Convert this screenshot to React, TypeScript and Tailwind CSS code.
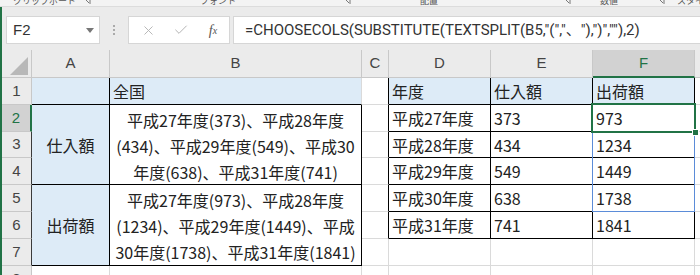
import React from 'react';
import { X, Check } from 'lucide-react';
import { twMerge } from 'tailwind-merge';

const JP = 'font-["Noto_Sans_CJK_JP","Noto_Sans",sans-serif]';
const UI = 'font-["Liberation_Sans","Noto_Sans_CJK_JP",sans-serif]';

type CellProps = {
  r?: boolean;
  b?: boolean;
  fill?: boolean;
  className?: string;
  children?: React.ReactNode;
};

const Cell: React.FC<CellProps> = ({ r, b, fill, className, children }) => (
  <div
    className={twMerge(
      'border-r border-b border-r-[#dadada] border-b-[#dadada] px-[3px] text-[16px] leading-[26px] text-[#222] whitespace-nowrap overflow-hidden',
      JP,
      r && 'border-r-black',
      b && 'border-b-black',
      fill && 'bg-[#ddebf7]',
      className
    )}
  >
    {children}
  </div>
);

const ColHead: React.FC<{ label: string; sel?: boolean }> = ({ label, sel }) => (
  <div
    className={twMerge(
      'flex items-center justify-center border-r border-b border-r-[#c8c8c8] border-b-[#c8c8c8] bg-[#ebebeb] text-[15px] text-[#444] overflow-hidden',
      UI,
      sel && 'bg-[#d2d2d2] text-[#217346] border-b-2 border-b-[#217346]'
    )}
  >
    {label}
  </div>
);

const RowHead: React.FC<{ n: number; dark?: boolean; sel?: boolean }> = ({ n, dark, sel }) => (
  <div
    className={twMerge(
      'flex items-center justify-center border-r border-b border-r-[#c8c8c8] border-b-[#c8c8c8] bg-[#ebebeb] text-[15px] text-[#444]',
      UI,
      dark && 'border-r-[#3a3a3a]',
      sel && 'bg-[#d2d2d2] text-[#217346] border-r-2 border-r-[#217346]'
    )}
  >
    {n}
  </div>
);

const Launcher = () => (
  <svg width="8" height="8" viewBox="0 0 8 8" className="shrink-0">
    <path d="M1 1h6v6" fill="none" stroke="#777" strokeWidth="1" />
    <path d="M2 2l4 4" stroke="#777" strokeWidth="1" />
  </svg>
);

// ribbon group labels, only their lower edge shows under the top of the window
const ribbon: { w: number; el: React.ReactNode }[] = [
  { w: 13, el: null },
  { w: 70, el: 'クリップボード' },
  { w: 117, el: <Launcher /> },
  { w: 143, el: 'フォント' },
  { w: 77, el: <Launcher /> },
  { w: 143, el: '配置' },
  { w: 37, el: <Launcher /> },
  { w: 57, el: '数値' },
  { w: 20, el: <Launcher /> },
  { w: 40, el: 'スタイル' },
];

const years = [
  ['平成27年度', '373', '973'],
  ['平成28年度', '434', '1234'],
  ['平成29年度', '549', '1449'],
  ['平成30年度', '638', '1738'],
  ['平成31年度', '741', '1841'],
];

const buyLines = ['平成27年度(373)、平成28年度', '(434)、平成29年度(549)、平成30', '年度(638)、平成31年度(741)'];
const shipLines = ['平成27年度(973)、平成28年度', '(1234)、平成29年度(1449)、平成', '30年度(1738)、平成31年度(1841)'];

const Ribbon = () => (
  <div className="h-[7px] overflow-hidden bg-[#f3f3f3] border-b border-[#dcdcdc]">
    <div className={`flex items-end -mt-[7px] h-[12px] text-[9px] text-[#555] ${JP}`}>
      {ribbon.map((it, i) => (
        <div key={i} style={{ width: it.w }} className="shrink-0 flex items-end leading-none">
          {it.el}
        </div>
      ))}
    </div>
  </div>
);

const FormulaBar = () => (
  <div className="h-[43px] bg-[#ebebeb] flex items-start pt-[9px] pl-[4px]">
    <div className={`w-[94px] h-[28px] bg-white border border-[#d6d6d6] flex items-center justify-between pl-[6px] pr-[5px] text-[15px] text-[#333] ${UI}`}>
      F2
      <svg width="8" height="5" viewBox="0 0 8 5">
        <path d="M0 0h8L4 5z" fill="#777" />
      </svg>
    </div>
    <div className="w-[28px] h-[28px] flex flex-col items-center justify-center gap-[2px]">
      <div className="w-[2px] h-[2px] bg-[#aaa]" />
      <div className="w-[2px] h-[2px] bg-[#aaa]" />
      <div className="w-[2px] h-[2px] bg-[#aaa]" />
    </div>
    <div className="w-[102px] h-[28px] bg-white border border-[#d6d6d6] flex items-center">
      <div className="w-[36px] flex justify-center pl-[2px]">
        <X size={15} strokeWidth={1.5} color="#b4b4b4" />
      </div>
      <div className="w-[32px] flex justify-center">
        <Check size={16} strokeWidth={1.5} color="#b4b4b4" />
      </div>
      <div className="w-[32px] flex justify-center text-[14px] text-[#555] italic font-['Liberation_Serif',serif]">
        f<span className="text-[10px] mt-[3px]">x</span>
      </div>
    </div>
    <div className="flex-1 h-[28px] ml-[3px] bg-white border border-r-0 border-[#d6d6d6] flex items-center pl-[11px] text-[15px] text-[#333] whitespace-nowrap overflow-hidden font-['Roboto','Noto_Sans_CJK_JP',sans-serif]">
      =CHOOSECOLS(SUBSTITUTE(TEXTSPLIT(B5,"(","、"),")",""),2)
    </div>
  </div>
);

const Lines: React.FC<{ lines: string[] }> = ({ lines }) => (
  <div className="h-full flex flex-col items-center justify-center pt-[2px]">
    {lines.map((l) => (
      <div key={l}>{l}</div>
    ))}
  </div>
);

const Sheet = () => (
  <div className="grid grid-cols-[30px_78px_252px_27px_102px_102px_102px_1fr] grid-rows-[28px_27px_27px_26px_27px_27px_27px_27px_27px]">
    {/* header row */}
    <div className="relative border-r border-b border-[#c8c8c8] bg-[#ebebeb]">
      <svg width="18" height="18" viewBox="0 0 18 18" className="absolute right-[3px] bottom-[2px]">
        <path d="M18 0V18H0z" fill="#b8b8b8" />
      </svg>
    </div>
    {['A', 'B', 'C', 'D', 'E'].map((l) => (
      <ColHead key={l} label={l} />
    ))}
    <ColHead label="F" sel />
    <ColHead label="" />

    {/* row 1 */}
    <RowHead n={1} />
    <Cell fill r b />
    <Cell fill b>全国</Cell>
    <Cell r />
    <Cell fill r b>年度</Cell>
    <Cell fill r b>仕入額</Cell>
    <Cell fill r b>出荷額</Cell>
    <Cell />

    {/* rows 2-6 */}
    {years.map((y, i) => {
      const row = i + 2;
      return (
        <React.Fragment key={y[0]}>
          <RowHead n={row} dark sel={row === 2} />
          {row === 2 && (
            <>
              <Cell fill r b className="row-span-3 flex items-center justify-center">
                仕入額
              </Cell>
              <Cell r b className="row-span-3">
                <Lines lines={buyLines} />
              </Cell>
            </>
          )}
          {row === 5 && (
            <>
              <Cell fill r b className="row-span-3 flex items-center justify-center">
                出荷額
              </Cell>
              <Cell r b className="row-span-3">
                <Lines lines={shipLines} />
              </Cell>
            </>
          )}
          <Cell r />
          <Cell r b>{y[0]}</Cell>
          <Cell r b>{y[1]}</Cell>
          {row === 2 ? (
            <div className="relative z-10">
              <Cell r b className="h-full">{y[2]}</Cell>
              {/* spill range outline F2:F6 */}
              <div className="absolute -left-[1px] -top-[1px] right-0 h-[108px] border border-[#5b8cd8] pointer-events-none" />
              {/* active cell */}
              <div className="absolute -left-[2px] -top-[2px] -right-[1px] -bottom-[1px] border-2 border-[#217346] pointer-events-none" />
              <div className="absolute -right-[4px] -bottom-[4px] w-[7px] h-[7px] bg-[#217346] border border-white" />
            </div>
          ) : (
            <Cell r b>{y[2]}</Cell>
          )}
          <Cell />
        </React.Fragment>
      );
    })}

    {/* row 7 (A and B are merged from row 5) */}
    <RowHead n={7} dark />
    <Cell />
    <Cell />
    <Cell />
    <Cell />
    <Cell />

    {/* row 8 */}
    <RowHead n={8} />
    <Cell />
    <Cell />
    <Cell />
    <Cell />
    <Cell />
    <Cell />
    <Cell />
  </div>
);

export default function App() {
  return (
    <div className="w-[700px] h-[275px] overflow-hidden bg-white">
      <Ribbon />
      <div className="border-l-2 border-[#217346]">
        <FormulaBar />
        <Sheet />
      </div>
    </div>
  );
}
